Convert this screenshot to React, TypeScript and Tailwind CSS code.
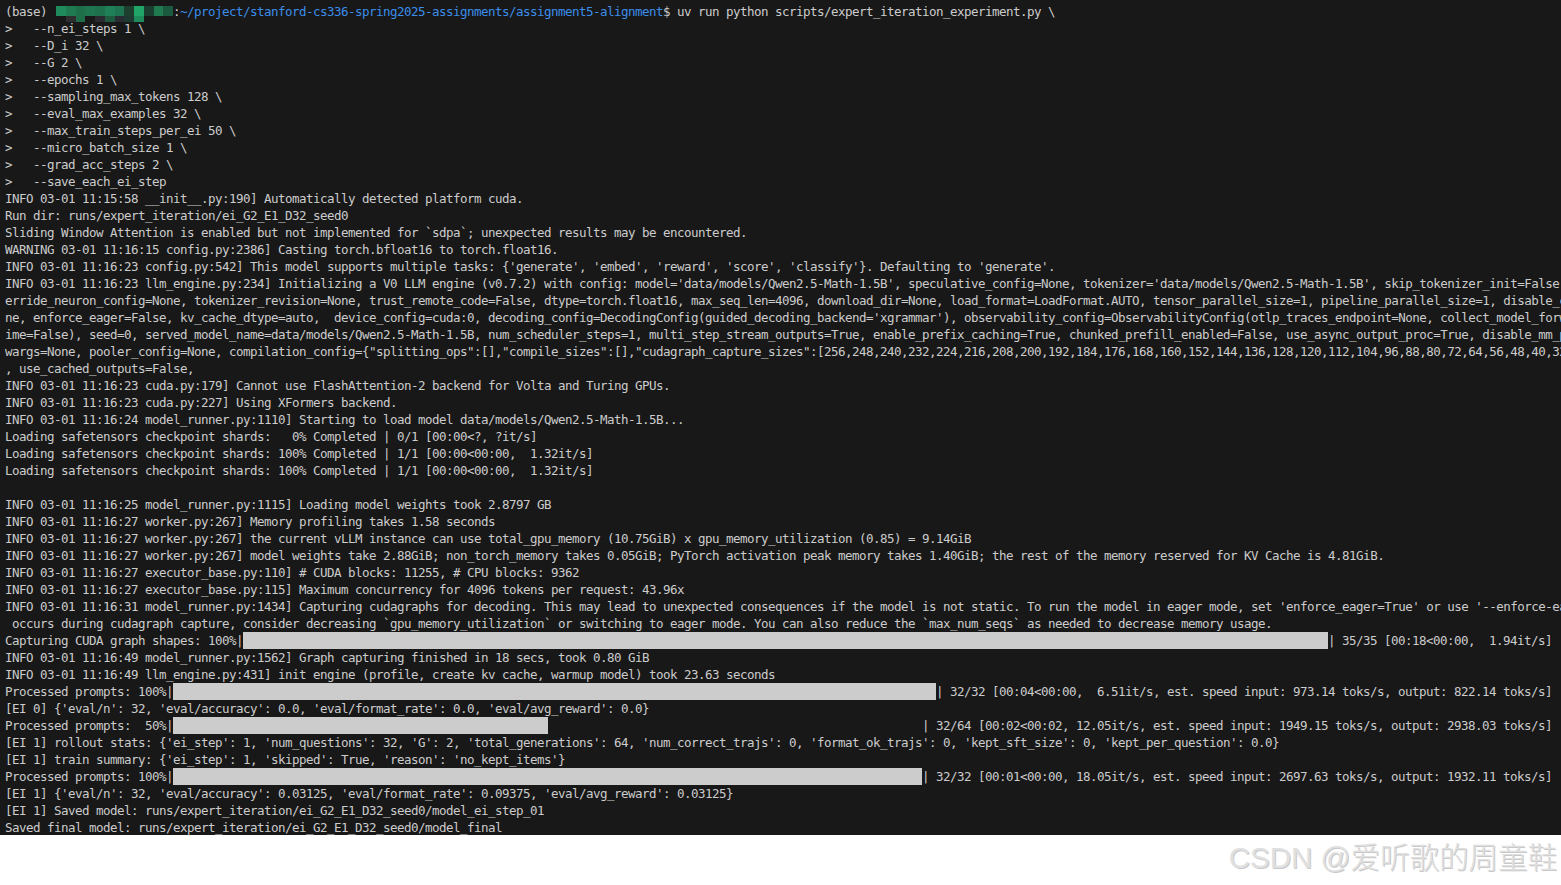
const lineClass = "h-[17px] leading-[17px] whitespace-pre";

const before: string[] = [
  ">   --n_ei_steps 1 \\",
  ">   --D_i 32 \\",
  ">   --G 2 \\",
  ">   --epochs 1 \\",
  ">   --sampling_max_tokens 128 \\",
  ">   --eval_max_examples 32 \\",
  ">   --max_train_steps_per_ei 50 \\",
  ">   --micro_batch_size 1 \\",
  ">   --grad_acc_steps 2 \\",
  ">   --save_each_ei_step",
  "INFO 03-01 11:15:58 __init__.py:190] Automatically detected platform cuda.",
  "Run dir: runs/expert_iteration/ei_G2_E1_D32_seed0",
  "Sliding Window Attention is enabled but not implemented for `sdpa`; unexpected results may be encountered.",
  "WARNING 03-01 11:16:15 config.py:2386] Casting torch.bfloat16 to torch.float16.",
  "INFO 03-01 11:16:23 config.py:542] This model supports multiple tasks: {'generate', 'embed', 'reward', 'score', 'classify'}. Defaulting to 'generate'.",
  "INFO 03-01 11:16:23 llm_engine.py:234] Initializing a V0 LLM engine (v0.7.2) with config: model='data/models/Qwen2.5-Math-1.5B', speculative_config=None, tokenizer='data/models/Qwen2.5-Math-1.5B', skip_tokenizer_init=False, tok",
  "erride_neuron_config=None, tokenizer_revision=None, trust_remote_code=False, dtype=torch.float16, max_seq_len=4096, download_dir=None, load_format=LoadFormat.AUTO, tensor_parallel_size=1, pipeline_parallel_size=1, disable_custom",
  "ne, enforce_eager=False, kv_cache_dtype=auto,  device_config=cuda:0, decoding_config=DecodingConfig(guided_decoding_backend='xgrammar'), observability_config=ObservabilityConfig(otlp_traces_endpoint=None, collect_model_forward_t",
  "ime=False), seed=0, served_model_name=data/models/Qwen2.5-Math-1.5B, num_scheduler_steps=1, multi_step_stream_outputs=True, enable_prefix_caching=True, chunked_prefill_enabled=False, use_async_output_proc=True, disable_mm_prepro",
  "wargs=None, pooler_config=None, compilation_config={\"splitting_ops\":[],\"compile_sizes\":[],\"cudagraph_capture_sizes\":[256,248,240,232,224,216,208,200,192,184,176,168,160,152,144,136,128,120,112,104,96,88,80,72,64,56,48,40,32,24",
  ", use_cached_outputs=False,",
  "INFO 03-01 11:16:23 cuda.py:179] Cannot use FlashAttention-2 backend for Volta and Turing GPUs.",
  "INFO 03-01 11:16:23 cuda.py:227] Using XFormers backend.",
  "INFO 03-01 11:16:24 model_runner.py:1110] Starting to load model data/models/Qwen2.5-Math-1.5B...",
  "Loading safetensors checkpoint shards:   0% Completed | 0/1 [00:00<?, ?it/s]",
  "Loading safetensors checkpoint shards: 100% Completed | 1/1 [00:00<00:00,  1.32it/s]",
  "Loading safetensors checkpoint shards: 100% Completed | 1/1 [00:00<00:00,  1.32it/s]",
  "",
  "INFO 03-01 11:16:25 model_runner.py:1115] Loading model weights took 2.8797 GB",
  "INFO 03-01 11:16:27 worker.py:267] Memory profiling takes 1.58 seconds",
  "INFO 03-01 11:16:27 worker.py:267] the current vLLM instance can use total_gpu_memory (10.75GiB) x gpu_memory_utilization (0.85) = 9.14GiB",
  "INFO 03-01 11:16:27 worker.py:267] model weights take 2.88GiB; non_torch_memory takes 0.05GiB; PyTorch activation peak memory takes 1.40GiB; the rest of the memory reserved for KV Cache is 4.81GiB.",
  "INFO 03-01 11:16:27 executor_base.py:110] # CUDA blocks: 11255, # CPU blocks: 9362",
  "INFO 03-01 11:16:27 executor_base.py:115] Maximum concurrency for 4096 tokens per request: 43.96x",
  "INFO 03-01 11:16:31 model_runner.py:1434] Capturing cudagraphs for decoding. This may lead to unexpected consequences if the model is not static. To run the model in eager mode, set 'enforce_eager=True' or use '--enforce-eager'",
  " occurs during cudagraph capture, consider decreasing `gpu_memory_utilization` or switching to eager mode. You can also reduce the `max_num_seqs` as needed to decrease memory usage.",
];

function Line({ text }: { text: string }) {
  return <div className={lineClass}>{text}</div>;
}

function Bar({ label, fill, rest = 0, tail }: { label: string; fill: string; rest?: number; tail: string }) {
  return (
    <div className={`${lineClass} flex`}>
      <span>{label}|</span>
      <span className={`h-[17px] shrink-0 bg-[#cccccc] ${fill}`} />
      {rest > 0 ? <span className="w-[374px] shrink-0" /> : null}
      <span>| {tail}</span>
    </div>
  );
}

const mosaicTop = [
  "bg-[#1f8a5c]", "bg-[#1f7a52]", "bg-[#1e6e4a]", "bg-[#1f7550]", "bg-[#1e6f4b]",
  "bg-[#1f8058]", "bg-[#1e7450]", "bg-[#1c3f30]", "bg-[#20a468]", "bg-[#1a3d30]", "bg-[#1f7a50]", "bg-[#1c5a40]",
];
const mosaicBottom = [
  "bg-[#181818]", "bg-[#2e2e2e]", "bg-[#1e6e4a]", "bg-[#181818]", "bg-[#2a2a30]",
  "bg-[#1e5a40]", "bg-[#2a2c34]", "bg-[#1e3a30]", "bg-[#1f8a5c]", "bg-[#181818]", "bg-[#181818]", "bg-[#181818]",
];

function Mosaic() {
  return (
    <span className="flex h-[17px] w-[119px] shrink-0 flex-col pt-[3px] pl-[2px]">
      <span className="flex h-[10px]">
        {mosaicTop.map((c, i) => (
          <span key={i} className={`h-[10px] w-[10px] ${c}`} />
        ))}
      </span>
      <span className="flex h-[6px]">
        {mosaicBottom.map((c, i) => (
          <span key={i} className={`h-[6px] w-[10px] ${c}`} />
        ))}
      </span>
    </span>
  );
}

export default function App() {
  return (
    <div className="relative flex h-[885px] w-[1561px] flex-col overflow-hidden bg-white">
      <div
        className="h-[835px] w-full shrink-0 overflow-hidden bg-[#181818] pt-[3px] pl-[5px] text-[12.5px] tracking-[-0.525px] text-[#cccccc]"
        style={{ fontFamily: '"DejaVu Sans Mono", monospace' }}
      >
        <div className={`${lineClass} flex`}>
          <span>(base) </span>
          <Mosaic />
          <span>:</span>
          <span className="text-[#3b8eea]">~/project/stanford-cs336-spring2025-assignments/assignment5-alignment</span>
          <span>$ uv run python scripts/expert_iteration_experiment.py \</span>
        </div>
        {before.map((t, i) => (
          <Line key={i} text={t} />
        ))}
        <Bar label="Capturing CUDA graph shapes: 100%" fill="w-[1085px]" tail="35/35 [00:18<00:00,  1.94it/s]" />
        <Line text="INFO 03-01 11:16:49 model_runner.py:1562] Graph capturing finished in 18 secs, took 0.80 GiB" />
        <Line text="INFO 03-01 11:16:49 llm_engine.py:431] init engine (profile, create kv cache, warmup model) took 23.63 seconds" />
        <Bar label="Processed prompts: 100%" fill="w-[763px]" tail="32/32 [00:04<00:00,  6.51it/s, est. speed input: 973.14 toks/s, output: 822.14 toks/s]" />
        <Line text="[EI 0] {'eval/n': 32, 'eval/accuracy': 0.0, 'eval/format_rate': 0.0, 'eval/avg_reward': 0.0}" />
        <Bar label="Processed prompts:  50%" fill="w-[375px]" rest={1} tail="32/64 [00:02<00:02, 12.05it/s, est. speed input: 1949.15 toks/s, output: 2938.03 toks/s]" />
        <Line text="[EI 1] rollout stats: {'ei_step': 1, 'num_questions': 32, 'G': 2, 'total_generations': 64, 'num_correct_trajs': 0, 'format_ok_trajs': 0, 'kept_sft_size': 0, 'kept_per_question': 0.0}" />
        <Line text="[EI 1] train summary: {'ei_step': 1, 'skipped': True, 'reason': 'no_kept_items'}" />
        <Bar label="Processed prompts: 100%" fill="w-[749px]" tail="32/32 [00:01<00:00, 18.05it/s, est. speed input: 2697.63 toks/s, output: 1932.11 toks/s]" />
        <Line text="[EI 1] {'eval/n': 32, 'eval/accuracy': 0.03125, 'eval/format_rate': 0.09375, 'eval/avg_reward': 0.03125}" />
        <Line text="[EI 1] Saved model: runs/expert_iteration/ei_G2_E1_D32_seed0/model_ei_step_01" />
        <Line text="Saved final model: runs/expert_iteration/ei_G2_E1_D32_seed0/model_final" />
      </div>
      <div className="flex flex-1 items-center justify-end pr-[4px] pb-[4px]">
        <span
          className="text-[29.5px] font-light leading-none text-[#e0e0e0] [text-shadow:1px_1px_0_#c8c8c8]"
          style={{ fontFamily: '"Liberation Sans", "Noto Sans CJK SC", sans-serif' }}
        >
          CSDN @爱听歌的周童鞋
        </span>
      </div>
    </div>
  );
}
